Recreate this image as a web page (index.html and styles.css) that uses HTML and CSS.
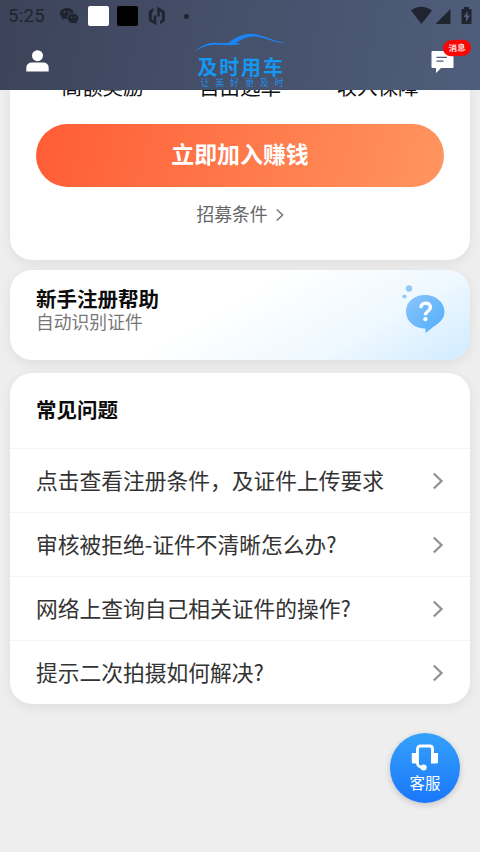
FILE: index.html
```html
<!DOCTYPE html>
<html lang="zh-CN">
<head>
<meta charset="utf-8">
<title>及时用车</title>
<link rel="stylesheet" href="styles.css">
</head>
<body>
<header class="header">
  <div class="status">
    <span class="time">5:25</span>
    <svg class="wechat" width="20" height="18" viewBox="0 0 20 18"><path d="M8 1C3.600 1 1 3.400 1 6.500c0 1.900 1 3.300 2.500 4.300L3 13l2.600-1.300 2.300.4C7.500 8 10.500 5.800 14.800 5.800 14 3 11.500 1 8 1z"/><path d="M14 6.800c-3 0-5.400 2-5.400 4.600s2.400 4.600 5.400 4.600l1.800-.3 2 1.200-.5-1.800c1.300-.9 2.100-2.200 2.100-3.700 0-2.600-2.400-4.600-5.400-4.600z"/><g class="hole"><circle cx="5.500" cy="5" r="1"/><circle cx="10" cy="5" r="1"/><circle cx="12.200" cy="10.200" r=".8"/><circle cx="15.800" cy="10.200" r=".8"/></g></svg>
    <span class="square white"></span>
    <span class="square black"></span>
    <svg class="mark" width="18" height="20" viewBox="0 0 18 20" fill="#20242f"><path d="M.8 5 5.500 2v3L3.700 6.500v6.700l2.100 1.200V9.500h2.500v9.800L.8 14.700z"/><path d="M.8 5 5.500 2v3L3.700 6.500v6.700l2.100 1.200V9.500h2.500v9.800L.8 14.700z" transform="rotate(180 8.800 10)"/></svg>
    <span class="dot"></span>
    <svg class="signals" width="62" height="20" viewBox="0 0 62 20" fill="#20242f"><path d="M1 4.500q10-7.500 21 0L11.500 18z"/><path d="M25.500 18 40.500 3v15z"/><path fill-rule="evenodd" d="M54 1h5v2h2.500v15h-10V3H54zM57.500 5l-4 6h2.500v5l4-6.500h-2.500z"/></svg>
  </div>
  <div class="nav">
    <svg class="user" width="24" height="22" viewBox="0 0 24 22" fill="#fff"><circle cx="11.500" cy="5.700" r="5.500"/><path d="M.3 21.500V18q0-5.500 6-5.500h10.400q6 0 6 5.500v3.500z"/></svg>
    <div class="brand">
      <svg class="car" width="92" height="20" viewBox="0 0 92 20" fill="#1b83f2"><path d="M0 19C6 12 13 9.500 22 9.800c4 .2 8 .3 11 .1C41 4 48 .8 57 .8 67 .8 76 7.500 90.500 10 85 11 74 6.500 65 4.200 56 2.300 48 5 41 10l5.500.8C39 13 31 11.800 22 11.800 13 11.800 6 14 0 19z"/></svg>
      <span class="name">及时用车</span>
      <span class="slogan">让美好更及时</span>
    </div>
    <div class="message">
      <svg width="24" height="22" viewBox="0 0 24 22"><path fill="#fff" d="M1.500 0h20q1 0 1 1v15q0 1-1 1H10l-5 5v-5H1.500q-1 0-1-1V1q0-1 1-1z"/><path d="M5.500 6.300H16M5.500 10.200h7" stroke="#4c5976" stroke-width="1.200"/></svg>
      <span class="badge">消息</span>
    </div>
  </div>
</header>
<main class="content">
  <section class="card join">
    <div class="perks"><span>高额奖励</span><span>自由选单</span><span>收入保障</span></div>
    <div class="button">立即加入赚钱</div>
    <div class="terms"><span>招募条件</span><svg width="8" height="14" viewBox="0 0 8 14" fill="none" stroke="#777" stroke-width="1.500"><path d="m.8 1.500 5.800 5.500-5.800 5.500"/></svg></div>
  </section>
  <section class="card help">
    <div><h2>新手注册帮助</h2><p>自动识别证件</p></div>
    <svg class="bubble" width="46" height="52" viewBox="0 0 46 52">
      <defs><linearGradient id="blue" x1="0" y1="0" x2="1" y2="1"><stop offset="0" stop-color="#8bc4fc"/><stop offset="1" stop-color="#50aefa"/></linearGradient></defs>
      <g fill="#91c9f7"><circle cx="8" cy="4.500" r="3.200"/><circle cx="3.500" cy="12.500" r="2.100"/></g>
      <path fill="url(#blue)" d="M24 11c11 0 19.500 7.500 19.500 16.500 0 7-4.500 11-10 14.500L24.500 49v-4.500C13 44.500 5 37 5 27.500S13 11 24 11z"/>
      <path d="M19.800 24c0-6.500 9.600-6.500 9.600-.5 0 3.800-5 3.800-5 7.700" fill="none" stroke="#fff" stroke-width="3.300"/><circle cx="24.400" cy="35.200" r="2.100" fill="#fff"/>
    </svg>
  </section>
  <section class="card faq">
    <h2>常见问题</h2>
    <div class="row"><span>点击查看注册条件，及证件上传要求</span><svg class="arrow" width="12" height="18" viewBox="0 0 12 18"><path d="m1.800 1.500 7.700 7.500-7.700 7.500"/></svg></div>
    <div class="row"><span>审核被拒绝-证件不清晰怎么办?</span><svg class="arrow" width="12" height="18" viewBox="0 0 12 18"><path d="m1.800 1.500 7.700 7.500-7.700 7.500"/></svg></div>
    <div class="row"><span>网络上查询自己相关证件的操作?</span><svg class="arrow" width="12" height="18" viewBox="0 0 12 18"><path d="m1.800 1.500 7.700 7.500-7.700 7.500"/></svg></div>
    <div class="row"><span>提示二次拍摄如何解决?</span><svg class="arrow" width="12" height="18" viewBox="0 0 12 18"><path d="m1.800 1.500 7.700 7.500-7.700 7.500"/></svg></div>
  </section>
</main>
<div class="service">
  <svg width="28" height="28" viewBox="0 0 28 28"><path d="M6.500 10V5q0-3 3-3h9q3 0 3 3v5M6.500 18v1.500q0 2.500 5 4.500" fill="none" stroke="#fff" stroke-width="2.800"/><g fill="#fff"><path d="M.8 9h7.100v10.500h-5.600q-1.500 0-1.500-1.500zM20 9h7v9q0 1.500-1.500 1.500H20z"/><circle cx="12.700" cy="23.500" r="3"/></g></svg>
  <span>客服</span>
</div>
</body>
</html>
```
FILE: styles.css
```css
* { box-sizing: border-box; }
body {
  margin: 0;
  height: 852px;
  overflow: hidden;
  background: #eeeeee;
  font-family: "Noto Sans CJK SC", sans-serif;
}
h2, p { margin: 0; }
svg { display: block; flex: none; }
.header {
  position: relative;
  z-index: 2;
  height: 90px;
  background: linear-gradient(100deg, #3c4359, #4f5e7c);
}
.status {
  height: 32px;
  padding: 0 10px 0 8px;
  display: flex;
  align-items: center;
  color: #20242f;
}
.time {
  width: 51px;
  font: 18.500px Roboto, sans-serif;
  letter-spacing: .3px;
}
.wechat { fill: #20242f; margin-right: 9px; }
.hole { fill: #3e455b; }
.square { width: 21px; height: 20px; border-radius: 2px; margin-right: 8px; }
.white { background: #fff; }
.black { background: #000; }
.mark { margin-left: 2px; }
.dot { width: 5px; height: 5px; border-radius: 50%; background: #20242f; margin-left: 18px; }
.signals { margin-left: auto; margin-right: -2px; }
.nav {
  height: 58px;
  padding: 0 25px 0 26px;
  display: grid;
  grid-template-columns: 1fr 92px 1fr;
}
.user { margin-top: 18px; }
.brand { display: flex; flex-direction: column; align-items: flex-start; color: #1597f2; }
.car { margin-top: 1px; }
.name { font-size: 20px; line-height: 24px; font-weight: 700; letter-spacing: 1.800px; margin: 2px 0 0 3px; white-space: nowrap; }
.slogan { font-size: 9px; line-height: 10px; letter-spacing: 5.800px; margin: -1px 0 0 6px; color: #1f8ee8; white-space: nowrap; }
.message { position: relative; justify-self: end; margin-top: 19px; }
.badge {
  position: absolute;
  left: 12px;
  top: -11px;
  width: 28px;
  height: 16px;
  border-radius: 8px;
  background: #fb0505;
  color: #fff;
  font-size: 8.500px;
  font-weight: 500;
  line-height: 15px;
  text-align: center;
  transform: rotate(-3deg);
}
.content { padding: 0 10px; margin-top: -20px; }
.card { background: #fff; border-radius: 22px; box-shadow: 0 3px 12px rgba(0, 0, 0, .07); }
.join { height: 190px; padding: 0 26px; border-radius: 0 0 22px 22px; }
.perks {
  display: grid;
  grid-template-columns: repeat(3, 137.500px);
  justify-content: center;
  height: 54px;
  color: #111;
  font-size: 20.500px;
  line-height: 32px;
  text-align: center;
}
.button {
  height: 63px;
  border-radius: 32px;
  background: linear-gradient(105deg, #ff5c35, #ff955f);
  color: #fff;
  font-size: 22.900px;
  font-weight: 700;
  line-height: 59px;
  text-align: center;
}
.terms {
  margin-top: 14px;
  height: 26px;
  display: flex;
  align-items: center;
  justify-content: center;
  gap: 8px;
  color: #666;
  font-size: 17.800px;
}
.terms span { padding-bottom: 2px; }
.terms svg { margin-top: 2px; }
.help {
  margin-top: 10px;
  height: 90px;
  padding: 15px 23px 0 26px;
  display: flex;
  justify-content: space-between;
  background: linear-gradient(150deg, #fff 45%, #eef8ff 75%, #d0ebff 100%);
}
.bubble { margin-top: -1px; }
.help h2 { font-size: 20.500px; line-height: 26px; }
.help p { margin-top: -1px; color: #777; font-size: 17.800px; line-height: 22px; }
.help h2, .faq h2 { color: #0c0c0c; font-weight: 700; }
.faq { margin-top: 13px; height: 331px; }
.faq h2 { height: 75px; padding-left: 26px; font-size: 20.500px; line-height: 73px; }
.row {
  height: 64px;
  border-top: 1px solid #f4f4f4;
  padding: 0 26px;
  display: flex;
  align-items: center;
  justify-content: space-between;
  color: #333;
  font-size: 21.750px;
  line-height: 30px;
}
.row span { padding-bottom: 2px; }
.arrow { fill: none; stroke: #929292; stroke-width: 2.300; }
.service {
  position: absolute;
  left: 390px;
  top: 733px;
  width: 70px;
  height: 70px;
  border-radius: 50%;
  background: linear-gradient(#35a1fb, #1977fa);
  box-shadow: 0 2px 6px rgba(0, 0, 0, .18);
  display: flex;
  flex-direction: column;
  align-items: center;
  padding-top: 11px;
  color: #fff;
  font-size: 15.500px;
  line-height: 20px;
}
```
